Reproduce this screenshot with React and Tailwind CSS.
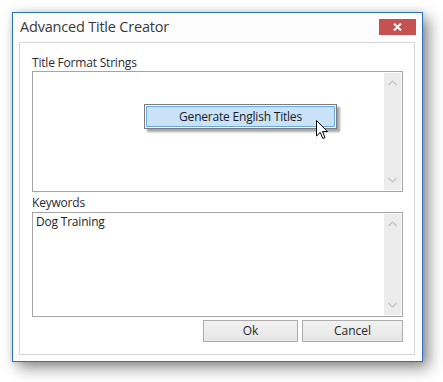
const font = { fontFamily: '"Open Sans", "Noto Sans", sans-serif' }

function Chevron({ up }) {
  return (
    <svg width="9" height="6" viewBox="0 0 9 6" className="block">
      <path d={up ? 'M0.5 5 L4.5 1 L8.5 5' : 'M0.5 1 L4.5 5 L8.5 1'} fill="none" stroke="#c2c2c2" strokeWidth="1.2" />
    </svg>
  )
}

function TextBox({ height, children }) {
  return (
    <div className={`relative flex border border-[#a5a5a5] bg-white ${height}`}>
      <div className="flex-1 px-[3px] pt-[1px] text-[12px] leading-[16px] tracking-[-0.2px] text-[#1f1f1f]">{children}</div>
      <div className="my-[1px] mr-[1px] flex w-[17px] flex-col items-center justify-between bg-[#ececec] py-[7px]">
        <Chevron up />
        <Chevron />
      </div>
    </div>
  )
}

function Cursor() {
  return (
    <svg width="13" height="20" viewBox="0 0 13 20" className="absolute left-[316px] top-[120px]">
      <path
        d="M0.5 0.5 L0.5 16 L4.2 12.4 L6.8 18.5 L9 17.6 L6.5 11.6 L11.5 11.6 Z"
        fill="#fff"
        stroke="#000"
        strokeWidth="1"
        strokeLinejoin="round"
      />
    </svg>
  )
}

export default function App() {
  return (
    <div className="relative h-[382px] w-[443px] bg-white pl-[12px] pt-[12px]" style={font}>
      <div className="flex h-[350px] w-[411px] flex-col border border-[#2f6fc4] bg-[#fcfcfc] shadow-[6px_6px_14px_rgba(0,0,0,0.45),0_0_6px_rgba(0,0,0,0.12)]">
        {/* Title bar */}
        <div className="flex h-[29px] items-start justify-between pl-[7px] pr-[6px]">
          <span className="pt-[4px] text-[14.5px] leading-[20px] tracking-[-0.2px] text-[#3a3a3a]">Advanced Title Creator</span>
          <button className="mt-[6px] flex h-[16px] w-[37px] items-center justify-center bg-[#c75050]">
            <svg width="9" height="8" viewBox="0 0 9 8">
              <path d="M1 0.5 L8 7.5 M8 0.5 L1 7.5" stroke="#fff" strokeWidth="2" />
            </svg>
          </button>
        </div>

        {/* Content panel */}
        <div className="mb-[6px] ml-[6px] mr-[7px] flex flex-1 flex-col border border-[#d5d5d5] bg-white pl-[12px] pr-[11px] pt-[12px]">
          <div className="h-[16px] text-[12px] leading-[16px] tracking-[-0.2px] text-[#2b2b35]">Title Format Strings</div>
          <TextBox height="h-[121px]" />
          <div className="mt-[3px] h-[16px] text-[12px] leading-[16px] tracking-[-0.2px] text-[#2b2b35]">Keywords</div>
          <div className="mt-[1px]">
            <TextBox height="h-[105px]">Dog Training</TextBox>
          </div>
          <div className="mt-[3px] flex justify-end gap-[4px]">
            <button className="h-[22px] w-[95px] border border-[#acacac] bg-gradient-to-b from-[#f2f2f2] to-[#e6e6e6] text-[12px] text-[#262626]">
              Ok
            </button>
            <button className="h-[22px] w-[101px] border border-[#acacac] bg-gradient-to-b from-[#f2f2f2] to-[#e6e6e6] text-[12px] text-[#262626]">
              Cancel
            </button>
          </div>
        </div>
      </div>

      {/* Context menu popup */}
      <div className="absolute left-[144px] top-[104px] h-[25px] w-[193px] border border-[#7a7a7a] bg-white p-[1px] shadow-[3px_3px_2px_rgba(0,0,0,0.35)]">
        <div className="flex h-full items-center justify-center border border-[#6aa8e6] bg-[#c9e2f8] text-[12px] tracking-[-0.2px] text-[#1c1c1c]">
          Generate English Titles
        </div>
      </div>
      <Cursor />
    </div>
  )
}
